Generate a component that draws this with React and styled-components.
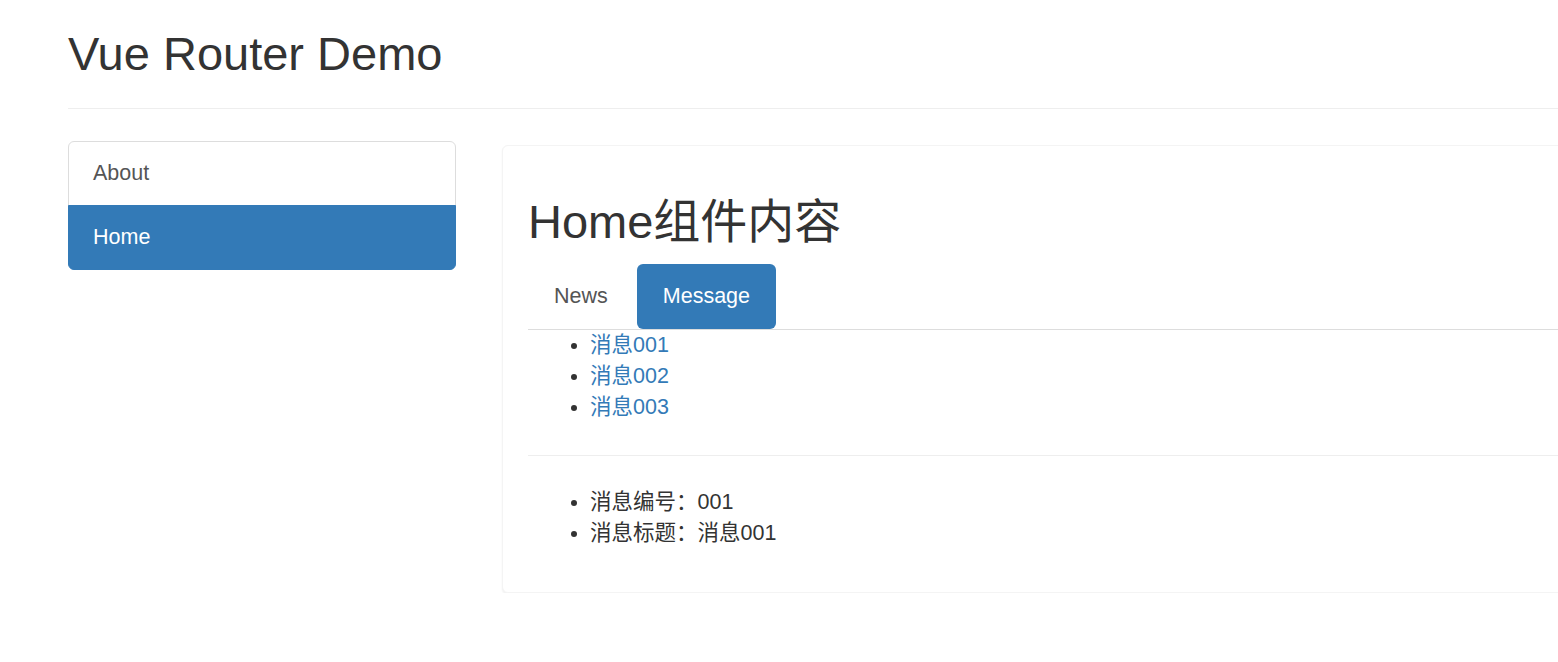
import React from "react";
import styled, { createGlobalStyle } from "styled-components";

const Global = createGlobalStyle`
  html, body {
    margin: 0;
    padding: 0;
    background: #fff;
    overflow: hidden;
  }
  body {
    font-family: "Liberation Sans", Arial, "Noto Sans CJK SC", sans-serif;
    font-size: 21.5px;
    line-height: 31px;
    color: #333;
  }
`;

const Page = styled.div`
  width: 1700px;
  padding-left: 68px;
  box-sizing: border-box;
`;

const PageHeader = styled.header`
  padding: 29px 0 28px;
  border-bottom: 1px solid #eee;
  margin-bottom: 32px;
`;

const Title = styled.h1`
  margin: 0;
  font-size: 47px;
  line-height: 50.6px;
  font-weight: 400;
  color: #333;
`;

const Row = styled.div`
  display: grid;
  grid-template-columns: 388px 1fr;
  column-gap: 46px;
  align-items: start;
`;

const ListGroup = styled.nav`
  display: flex;
  flex-direction: column;
`;

const ListItem = styled.a`
  display: block;
  padding: 16.5px 24px;
  line-height: 30px;
  font-size: 21.5px;
  text-decoration: none;
  border: 1px solid ${(p) => (p.$active ? "#337ab7" : "#ddd")};
  background: ${(p) => (p.$active ? "#337ab7" : "#fff")};
  color: ${(p) => (p.$active ? "#fff" : "#555")};
  margin-bottom: -1px;
  &:first-child {
    border-radius: 6px 6px 0 0;
  }
  &:last-child {
    border-radius: 0 0 6px 6px;
    margin-bottom: 0;
  }
`;

const Panel = styled.section`
  margin-top: 4px;
  background: #fff;
  border: 1px solid #f4f4f4;
  border-radius: 6px;
  box-shadow: 0 1.5px 2px rgba(0, 0, 0, 0.06);
  padding: 22.5px 25px 43px;
`;

const SubTitle = styled.h2`
  margin: 29px 0 16px;
  font-size: 47px;
  line-height: 50.6px;
  font-weight: 400;
  color: #333;
`;

const Tabs = styled.ul`
  display: flex;
  list-style: none;
  margin: 0;
  padding: 0;
  border-bottom: 1px solid #ddd;
`;

const Tab = styled.li`
  margin-right: 3px;
`;

const TabLink = styled.a`
  display: block;
  padding: 17.5px 26px;
  line-height: 30px;
  font-size: 21.5px;
  border-radius: 6px;
  text-decoration: none;
  color: ${(p) => (p.$active ? "#fff" : "#555")};
  background: ${(p) => (p.$active ? "#337ab7" : "transparent")};
`;

const List = styled.ul`
  margin: 0;
  padding-left: 62px;
  list-style: disc;
  color: #333;
`;

const Item = styled.li`
  line-height: 31px;
  font-size: 21.5px;
`;

const Link = styled.a`
  color: #337ab7;
  text-decoration: none;
`;

const Rule = styled.hr`
  border: 0;
  border-top: 1px solid #eee;
  margin: 32px 0 31px;
`;

export default function App() {
  return (
    <>
      <Global />
      <Page>
        <PageHeader>
          <Title>Vue Router Demo</Title>
        </PageHeader>
        <Row>
          <ListGroup>
            <ListItem href="#about">About</ListItem>
            <ListItem href="#home" $active>
              Home
            </ListItem>
          </ListGroup>
          <Panel>
            <SubTitle>Home组件内容</SubTitle>
            <Tabs>
              <Tab>
                <TabLink href="#news">News</TabLink>
              </Tab>
              <Tab>
                <TabLink href="#message" $active>
                  Message
                </TabLink>
              </Tab>
            </Tabs>
            <List>
              <Item>
                <Link href="#1">消息001</Link>
              </Item>
              <Item>
                <Link href="#2">消息002</Link>
              </Item>
              <Item>
                <Link href="#3">消息003</Link>
              </Item>
            </List>
            <Rule />
            <List>
              <Item>消息编号：001</Item>
              <Item>消息标题：消息001</Item>
            </List>
          </Panel>
        </Row>
      </Page>
    </>
  );
}
